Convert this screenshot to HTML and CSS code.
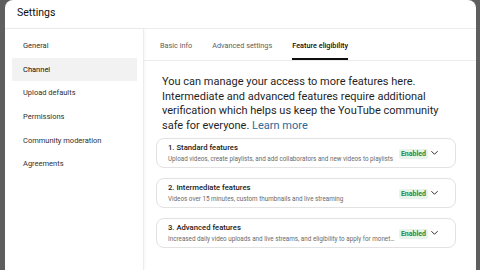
FILE: index.html
```html
<!DOCTYPE html>
<html lang="en">
  <head>
    <meta charset="utf-8">
    <title>Settings</title>
    <link rel="stylesheet" href="styles.css">
  </head>
  <body>
    <div class="window">
      <div class="window__header">Settings</div>
      <div class="window__main">
        <nav class="sidebar">
          <div class="sidebar__item">General</div>
          <div class="sidebar__item sidebar__item--active">Channel</div>
          <div class="sidebar__item">Upload defaults</div>
          <div class="sidebar__item">Permissions</div>
          <div class="sidebar__item">Community moderation</div>
          <div class="sidebar__item">Agreements</div>
        </nav>
        <div class="content">
          <div class="tabs">
            <div class="tabs__tab">Basic info</div>
            <div class="tabs__tab">Advanced settings</div>
            <div class="tabs__tab tabs__tab--active">Feature eligibility</div>
          </div>
          <p class="intro">You can manage your access to more features here. Intermediate and advanced features require additional verification which helps us keep the YouTube community safe for everyone. <a class="intro__link">Learn more</a></p>
          <div class="cards">
            <div class="card">
              <div class="card__text">
                <div class="card__title">1. Standard features</div>
                <div class="card__desc">Upload videos, create playlists, and add collaborators and new videos to playlists</div>
              </div>
              <span class="card__badge">Enabled</span>
              <svg class="card__chevron" viewBox="0 0 10 10"><path d="M1.5 3.5 L5 7 L8.5 3.5"/></svg>
            </div>
            <div class="card">
              <div class="card__text">
                <div class="card__title">2. Intermediate features</div>
                <div class="card__desc">Videos over 15 minutes, custom thumbnails and live streaming</div>
              </div>
              <span class="card__badge">Enabled</span>
              <svg class="card__chevron" viewBox="0 0 10 10"><path d="M1.5 3.5 L5 7 L8.5 3.5"/></svg>
            </div>
            <div class="card">
              <div class="card__text">
                <div class="card__title">3. Advanced features</div>
                <div class="card__desc">Increased daily video uploads and live streams, and eligibility to apply for monetization</div>
              </div>
              <span class="card__badge">Enabled</span>
              <svg class="card__chevron" viewBox="0 0 10 10"><path d="M1.5 3.5 L5 7 L8.5 3.5"/></svg>
            </div>
          </div>
        </div>
      </div>
    </div>
  </body>
</html>
```

FILE: styles.css
```css
*, *::after, *::before {
  margin: 0;
  padding: 0;
  box-sizing: border-box;
}
body {
  height: 270px;
  overflow: hidden;
  background-color: #5e5e5e;
  font-family: Roboto, "Liberation Sans", sans-serif;
  color: #0f0f0f;
}
.window {
  display: flex;
  flex-direction: column;
  height: 270px;
  margin: 0 4px 0 5px;
  background-color: #fff;
  border-radius: 8px 8px 0 0;
}
.window__header {
  height: 29px;
  padding: 6px 0 0 12px;
  font-size: 10.5px;
  border-bottom: 1px solid #ececec;
}
.window__main {
  display: flex;
  flex: 1;
}
.sidebar {
  width: 139px;
  padding-top: 5px;
  border-right: 1px solid #ececec;
  box-shadow: 1px 0 3px rgba(0, 0, 0, 0.04);
}
.sidebar__item {
  display: flex;
  align-items: center;
  height: 23.6px;
  margin: 0 6px 0 7px;
  padding-left: 11px;
  font-size: 7.5px;
  color: #303030;
}
.sidebar__item--active {
  background-color: #f2f2f2;
  color: #0f0f0f;
}
.content {
  flex: 1;
}
.tabs {
  display: flex;
  gap: 20px;
  height: 32px;
  padding-left: 16px;
  border-bottom: 1px solid #ececec;
}
.tabs__tab {
  display: flex;
  align-items: center;
  padding-top: 4px;
  font-size: 7.3px;
  color: #606060;
  border-bottom: 2px solid transparent;
}
.tabs__tab--active {
  color: #0f0f0f;
  font-weight: 500;
  border-bottom-color: #0f0f0f;
}
.intro {
  width: 300px;
  padding: 14px 0 0 18px;
  font-size: 11px;
  line-height: 14.7px;
  color: #1f1f1f;
}
.intro__link {
  color: #2a6a9a;
}
.cards {
  display: flex;
  flex-direction: column;
  gap: 10px;
  width: 300px;
  margin: 4px 0 0 12px;
}
.card {
  display: flex;
  align-items: center;
  height: 30px;
  padding: 0 16px 0 11px;
  border: 1px solid #e2e2e2;
  border-radius: 8px;
}
.card__text {
  flex: 1;
  min-width: 0;
  margin-right: 4px;
}
.card__title {
  font-size: 7.7px;
  font-weight: 500;
  line-height: 11px;
  color: #1a1a1a;
}
.card__desc {
  margin-top: 2px;
  font-size: 6.3px;
  color: #6a6a6a;
  white-space: nowrap;
  overflow: hidden;
  text-overflow: ellipsis;
}
.card__badge {
  margin-top: 2px;
  padding: 1px 2px;
  font-size: 7px;
  font-weight: 700;
  color: #1e8e3e;
  background-color: #e6f4ea;
  border-radius: 2px;
}
.card__chevron {
  width: 9px;
  height: 9px;
  margin-left: 2px;
  fill: none;
  stroke: #303030;
  stroke-width: 1.1;
}
```
